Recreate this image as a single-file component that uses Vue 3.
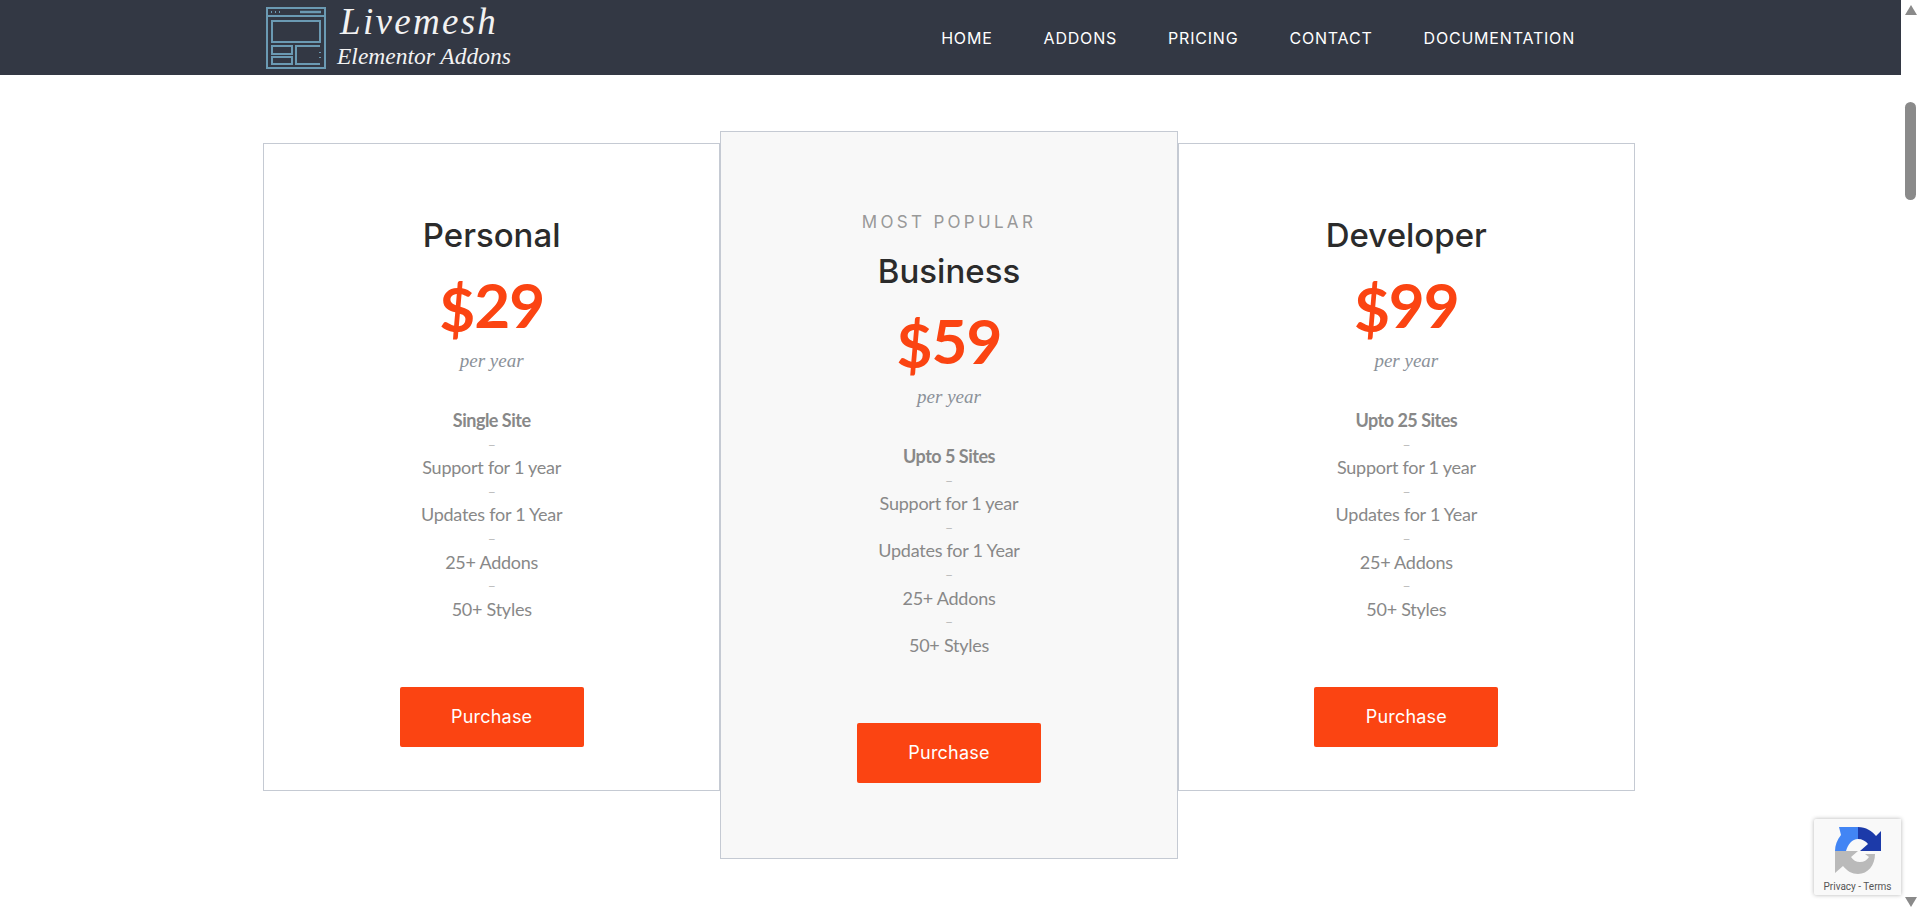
<template>
  <div class="page">
    <div class="content">
      <header class="site-header">
        <a class="logo">
          <svg class="logo-icon" viewBox="0 0 60 62" fill="none" stroke="#6b9ab3" stroke-width="2">
            <rect x="1" y="1" width="58" height="60" />
            <path d="M1 9H59" />
            <path d="M5 5H6M9 5H10M13 5H14" />
            <path d="M34 5H55" stroke-width="2.5" />
            <rect x="6" y="14" width="48" height="21" />
            <rect x="6" y="39" width="20" height="8" />
            <rect x="6" y="50" width="20" height="7" />
            <path d="M54 39H30V57H54M54 45V46M54 50V51" />
          </svg>
          <span class="logo-text">
            <span class="logo-name">Livemesh</span>
            <span class="logo-sub">Elementor Addons</span>
          </span>
        </a>
        <nav class="main-nav">
          <a v-for="item in navItems" :key="item">{{ item }}</a>
        </nav>
      </header>

      <main class="pricing">
        <section v-for="plan in plans" :key="plan.name" class="plan" :class="{ featured: plan.popular }">
          <div v-if="plan.popular" class="popular">MOST POPULAR</div>
          <h2>{{ plan.name }}</h2>
          <div class="price"><span class="dollar">$</span>{{ plan.price }}</div>
          <div class="period">per year</div>
          <ul class="features">
            <template v-for="(feature, i) in plan.features" :key="feature">
              <li v-if="i > 0" class="sep">–</li>
              <li :class="{ lead: i === 0 }">{{ feature }}</li>
            </template>
          </ul>
          <a class="buy">Purchase</a>
        </section>
      </main>
    </div>

    <aside class="scrollbar">
      <svg class="arrow" viewBox="0 0 12 10"><path d="M6 0L12 10H0Z" /></svg>
      <div class="thumb"></div>
      <svg class="arrow down" viewBox="0 0 12 10"><path d="M0 0H12L6 10Z" /></svg>
    </aside>

    <div class="recaptcha">
      <svg class="recaptcha-icon" viewBox="0 0 70 60">
        <path fill="#4285f4" d="M10 32C10 26 12 21 16 16L14 8H33V20C27 20 23 25 21 32Z" />
        <path fill="#1c3aa9" d="M33 8C41 8 47 12 51 17L56 12V32H35L43 25C41 22 37 20 33 20Z" />
        <path fill="#bababa" d="M10 32H33L26 38C28 41 31 43 35 43C39 43 42 41 44 38L40 35H50C50 46 43 55 33 55C27 55 22 52 18 47L10 54Z" />
      </svg>
      <div class="recaptcha-links">Privacy - Terms</div>
    </div>
  </div>
</template>

<script setup>
const navItems = ['HOME', 'ADDONS', 'PRICING', 'CONTACT', 'DOCUMENTATION']

const common = ['Support for 1 year', 'Updates for 1 Year', '25+ Addons', '50+ Styles']

const plans = [
  { name: 'Personal', price: '29', features: ['Single Site', ...common] },
  { name: 'Business', price: '59', popular: true, features: ['Upto 5 Sites', ...common] },
  { name: 'Developer', price: '99', features: ['Upto 25 Sites', ...common] }
]
</script>

<style>
html,
body {
  margin: 0;
  overflow: hidden;
  background: #fff;
}
</style>

<style scoped>
.page {
  position: relative;
  display: flex;
  height: 912px;
  overflow: hidden;
  font-family: Lato, sans-serif;
}

.content {
  width: 1901px;
}

.site-header {
  display: flex;
  align-items: center;
  justify-content: space-between;
  height: 75px;
  padding: 0 326px 0 266px;
  background: #333844;
}

.logo {
  display: flex;
  align-items: center;
  gap: 11px;
}

.logo-icon {
  width: 60px;
  height: 62px;
}

.logo-text {
  display: flex;
  flex-direction: column;
  margin-bottom: 2px;
  color: #f2f2f2;
  font-family: 'Liberation Serif', serif;
  font-style: italic;
}

.logo-name {
  margin-left: 3px;
  font-size: 37px;
  line-height: 38px;
  letter-spacing: 2.3px;
}

.logo-sub {
  font-size: 23.5px;
  line-height: 30px;
}

.main-nav {
  display: flex;
  gap: 51px;
  color: #fff;
  font-family: Inter, sans-serif;
  font-size: 16px;
  letter-spacing: 0.8px;
}

.pricing {
  display: grid;
  grid-template-columns: repeat(3, 457.33px);
  padding: 68px 0 0 263px;
  align-items: start;
}

.plan {
  box-sizing: border-box;
  height: 648px;
  padding-top: 68px;
  border: 1px solid #c5cad3;
  background: #fff;
  text-align: center;
}

.plan.featured {
  position: relative;
  z-index: 1;
  height: 728px;
  margin-top: -12px;
  padding-top: 78px;
  background: #f8f8f8;
}

.popular {
  margin-bottom: 14px;
  color: #999;
  font-family: Inter, sans-serif;
  font-size: 17px;
  line-height: 24px;
  letter-spacing: 3.3px;
}

h2 {
  margin: 0;
  color: #2b2b2b;
  font-family: Inter, sans-serif;
  font-size: 33px;
  font-weight: 500;
  line-height: 46px;
}

.price {
  margin-top: 9px;
  color: #fb4412;
  font-family: Lato, sans-serif;
  font-size: 62px;
  font-weight: 700;
  line-height: 74px;
  letter-spacing: -1px;
}

.dollar {
  vertical-align: -4px;
}

.period {
  margin-top: 2px;
  color: #8b9199;
  font-family: 'Liberation Serif', serif;
  font-size: 19px;
  font-style: italic;
  line-height: 28px;
}

.features {
  margin: 34px 0 0;
  padding: 0;
  list-style: none;
  color: #888;
  font-size: 18px;
  line-height: 23.6px;
  letter-spacing: -0.25px;
}

.features .lead {
  font-weight: 700;
  letter-spacing: -0.5px;
}

.features .sep {
  color: #bbb;
  font-size: 14px;
}

.buy {
  display: block;
  width: 184px;
  height: 60px;
  margin: 66px auto 0;
  border-radius: 2px;
  background: #fb4412;
  color: #fff;
  font-family: Inter, sans-serif;
  font-size: 18px;
  line-height: 60px;
  letter-spacing: 0.2px;
}

.scrollbar {
  display: flex;
  flex-direction: column;
  align-items: center;
  width: 19px;
  background: #fff;
}

.arrow {
  width: 12px;
  height: 10px;
  margin-top: 5px;
  fill: #8a8a8a;
}

.arrow.down {
  margin-top: auto;
  margin-bottom: 5px;
}

.thumb {
  width: 11px;
  height: 98px;
  margin-top: 87px;
  border-radius: 6px;
  background: #8a8a8a;
}

.recaptcha {
  position: absolute;
  top: 819px;
  left: 1814px;
  box-sizing: border-box;
  width: 87px;
  height: 76px;
  padding-top: 6px;
  border-radius: 2px 0 0 2px;
  background: #f9f9f9;
  box-shadow: 0 0 4px rgba(0, 0, 0, 0.3);
  text-align: center;
}

.recaptcha-icon {
  display: block;
  width: 70px;
  height: 60px;
  margin: -6px 0 0 11px;
}

.recaptcha-links {
  margin-top: 1px;
  color: #555;
  font-family: Roboto, sans-serif;
  font-size: 10px;
  line-height: 14px;
}
</style>
